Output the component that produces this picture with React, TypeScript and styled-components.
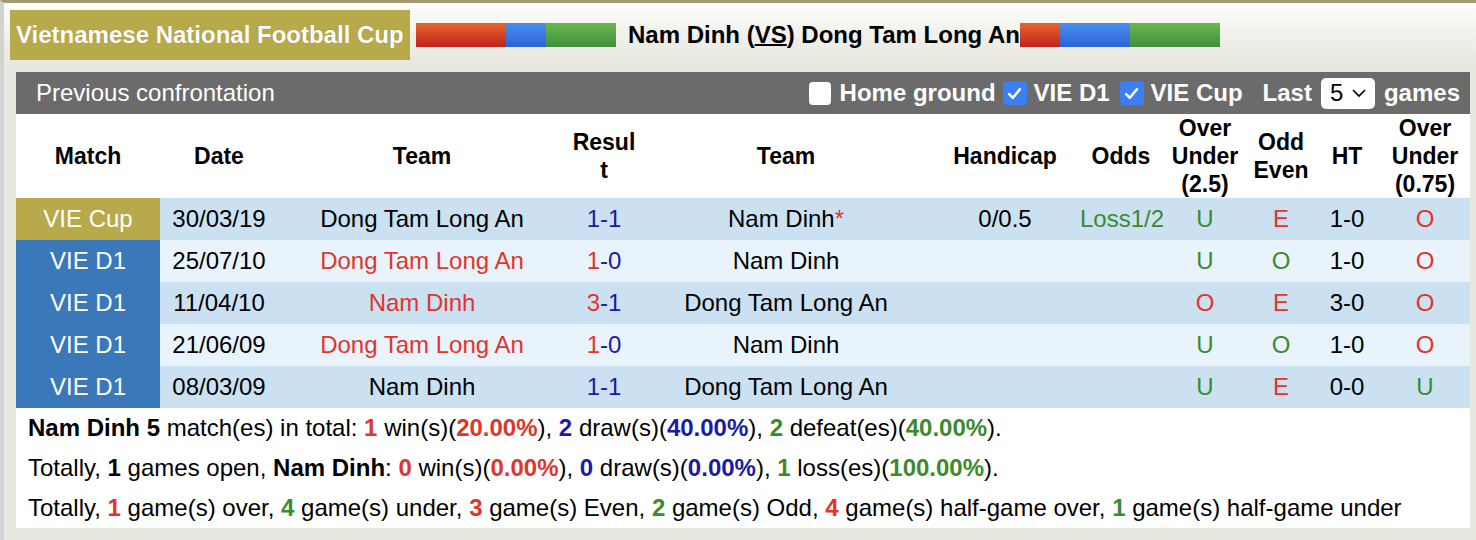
import React, {FC} from 'react';
import styled, {createGlobalStyle} from 'styled-components';

const GlobalStyle = createGlobalStyle`
  html, body {
    margin: 0;
    padding: 0;
    background: #e8e8e0;
    font-family: "Liberation Sans", Arial, sans-serif;
  }
`;

const RED = '#e0352b';
const BLUE = '#1a1aa8';
const GREEN = '#3b8a2c';

type Tone = 'red' | 'blue' | 'green' | 'black';
const toneColor = (t?: Tone) => t === 'red' ? RED : t === 'blue' ? BLUE : t === 'green' ? GREEN : '#000';

interface Row {
    league: 'VIE Cup' | 'VIE D1';
    date: string;
    home: string;
    homeTone: Tone;
    score: [string, string];
    scoreTone: [Tone, Tone];
    away: string;
    star?: boolean;
    handicap: string;
    odds: string;
    ou: ['U' | 'O', Tone];
    oe: ['O' | 'E', Tone];
    ht: string;
    ou2: ['U' | 'O', Tone];
}

const rows: Row[] = [
    {league: 'VIE Cup', date: '30/03/19', home: 'Dong Tam Long An', homeTone: 'black', score: ['1', '-1'], scoreTone: ['blue', 'blue'], away: 'Nam Dinh', star: true, handicap: '0/0.5', odds: 'Loss1/2', ou: ['U', 'green'], oe: ['E', 'red'], ht: '1-0', ou2: ['O', 'red']},
    {league: 'VIE D1', date: '25/07/10', home: 'Dong Tam Long An', homeTone: 'red', score: ['1', '-0'], scoreTone: ['red', 'blue'], away: 'Nam Dinh', handicap: '', odds: '', ou: ['U', 'green'], oe: ['O', 'green'], ht: '1-0', ou2: ['O', 'red']},
    {league: 'VIE D1', date: '11/04/10', home: 'Nam Dinh', homeTone: 'red', score: ['3', '-1'], scoreTone: ['red', 'blue'], away: 'Dong Tam Long An', handicap: '', odds: '', ou: ['O', 'red'], oe: ['E', 'red'], ht: '3-0', ou2: ['O', 'red']},
    {league: 'VIE D1', date: '21/06/09', home: 'Dong Tam Long An', homeTone: 'red', score: ['1', '-0'], scoreTone: ['red', 'blue'], away: 'Nam Dinh', handicap: '', odds: '', ou: ['U', 'green'], oe: ['O', 'green'], ht: '1-0', ou2: ['O', 'red']},
    {league: 'VIE D1', date: '08/03/09', home: 'Nam Dinh', homeTone: 'black', score: ['1', '-1'], scoreTone: ['blue', 'blue'], away: 'Dong Tam Long An', handicap: '', odds: '', ou: ['U', 'green'], oe: ['E', 'red'], ht: '0-0', ou2: ['U', 'green']},
];

const colWidths = [144, 118, 288, 76, 288, 150, 82, 86, 66, 66, 90];

const Page = styled.div`
  border-top: 3px solid #a39b6d;
  border-left: 4px solid #d2d2d0;
  min-height: 537px;
`;

const TopBar = styled.div`
  display: flex;
  align-items: center;
  height: 57px;
  padding: 7px 0 0 6px;
  box-sizing: border-box;
  background: linear-gradient(#fdfdfb, #e8e8e0);
`;

const Title = styled.div`
  width: 400px;
  height: 50px;
  background: #b8aa4a;
  color: #fff;
  font-size: 24px;
  font-weight: bold;
  line-height: 50px;
  padding-left: 6px;
  box-sizing: border-box;
  text-shadow: 0 0 1px rgba(0, 0, 0, .25);
  white-space: nowrap;
`;

const ColorBar = styled.div`
  display: flex;
  height: 24px;
  flex: none;
`;

const Seg = styled.span<{ $w: number; $c: 'red' | 'blue' | 'green' }>`
  width: ${p => p.$w}px;
  background: ${p => p.$c === 'red'
    ? 'linear-gradient(#e8652c, #c0241c)'
    : p.$c === 'blue'
      ? 'linear-gradient(#4a8ff0, #2c62d4)'
      : 'linear-gradient(#6cb84c, #3f9040)'};
`;

const Versus = styled.div`
  margin-left: 12px;
  font-size: 24px;
  font-weight: bold;
  color: #000;
  white-space: nowrap;

  u {
    text-decoration-thickness: 2px;
  }
`;

const Panel = styled.div`
  margin: 12px 6px 0 12px;
`;

const PanelHead = styled.div`
  display: flex;
  align-items: center;
  height: 42px;
  background: #6b6b6b;
  padding: 0 10px 0 20px;
  color: #fff;
`;

const HeadTitle = styled.div`
  font-size: 24px;
  flex: 1;
`;

const Controls = styled.div`
  display: flex;
  align-items: center;
  font-size: 24px;
  font-weight: bold;
`;

const Box = styled.span<{ $on?: boolean; $gap: number }>`
  display: inline-flex;
  align-items: center;
  justify-content: center;
  width: ${p => p.$on ? 24 : 22}px;
  height: ${p => p.$on ? 24 : 23}px;
  border-radius: 4px;
  background: ${p => p.$on ? '#3a7ff4' : '#fff'};
  margin-right: ${p => p.$gap}px;
`;

const Label = styled.span<{ $gap: number }>`
  margin-right: ${p => p.$gap}px;
`;

const Select = styled.span`
  display: inline-flex;
  align-items: center;
  gap: 8px;
  height: 31px;
  width: 54px;
  box-sizing: border-box;
  padding-left: 9px;
  background: #fff;
  border-radius: 5px;
  color: #000;
  font-weight: normal;
  margin-right: 9px;
`;

const Check: FC<{ on?: boolean; gap: number }> = ({on, gap}) => (
    <Box $on={on} $gap={gap}>
        {on && (
            <svg width="15" height="15" viewBox="0 0 14 14">
                <path d="M2 7.5 L5.5 11 L12 3" fill="none" stroke="#fff" strokeWidth="2.4" strokeLinecap="round" strokeLinejoin="round"/>
            </svg>
        )}
    </Box>
);

const Table = styled.table`
  width: 1454px;
  table-layout: fixed;
  border-collapse: collapse;
`;

const Th = styled.th<{ $breakAll?: boolean }>`
  height: 84px;
  background: #fff;
  font-size: 23px;
  line-height: 28px;
  font-weight: bold;
  padding: 0 4px;
  text-align: center;
  vertical-align: middle;
  word-break: ${p => p.$breakAll ? 'break-all' : 'normal'};
`;

const Tr = styled.tr<{ $alt: boolean }>`
  height: 42px;
  background: ${p => p.$alt ? '#e8f3fb' : '#cbe1f2'};
`;

const Td = styled.td<{ $tone?: Tone }>`
  padding: 0;
  text-align: center;
  font-size: 24px;
  color: ${p => toneColor(p.$tone)};
  white-space: nowrap;
`;

const League = styled(Td)<{ $cup: boolean }>`
  background: ${p => p.$cup ? '#b8aa4a' : '#3a78b9'};
  color: #fff;
`;

const Tone = styled.span<{ $tone: Tone }>`
  color: ${p => toneColor(p.$tone)};
`;

const Star = styled.span`
  color: ${RED};
`;

const Summary = styled.div`
  background: #fff;
  padding: 0 12px;
  font-size: 24px;
  line-height: 40px;
  color: #000;
  white-space: nowrap;
`;

const Num = styled.b<{ $tone?: Tone }>`
  color: ${p => toneColor(p.$tone)};
`;

const headers = ['Match', 'Date', 'Team', 'Result', 'Team', 'Handicap', 'Odds', 'Over Under (2.5)', 'Odd Even', 'HT', 'Over Under (0.75)'];

export default function App() {
    return (
        <Page>
            <GlobalStyle/>
            <TopBar>
                <Title>Vietnamese National Football Cup</Title>
                <ColorBar style={{marginLeft: 6}}>
                    <Seg $w={90} $c="red"/>
                    <Seg $w={40} $c="blue"/>
                    <Seg $w={70} $c="green"/>
                </ColorBar>
                <Versus>Nam Dinh (<u>VS</u>) Dong Tam Long An</Versus>
                <ColorBar>
                    <Seg $w={40} $c="red"/>
                    <Seg $w={70} $c="blue"/>
                    <Seg $w={90} $c="green"/>
                </ColorBar>
            </TopBar>
            <Panel>
                <PanelHead>
                    <HeadTitle>Previous confrontation</HeadTitle>
                    <Controls>
                        <Check gap={9}/>
                        <Label $gap={7}>Home ground</Label>
                        <Check on gap={7}/>
                        <Label $gap={10}>VIE D1</Label>
                        <Check on gap={7}/>
                        <Label $gap={20}>VIE Cup</Label>
                        <Label $gap={9}>Last</Label>
                        <Select>
                            5
                            <svg width="16" height="10" viewBox="0 0 16 10">
                                <path d="M2 2 L8 8 L14 2" fill="none" stroke="#000" strokeWidth="1.6"/>
                            </svg>
                        </Select>
                        <Label $gap={0}>games</Label>
                    </Controls>
                </PanelHead>
                <Table>
                    <colgroup>
                        {colWidths.map((w, i) => <col key={i} style={{width: w}}/>)}
                    </colgroup>
                    <thead>
                    <tr>
                        {headers.map((h, i) => <Th key={i} $breakAll={h === 'Result'}>{h}</Th>)}
                    </tr>
                    </thead>
                    <tbody>
                    {rows.map((r, i) => (
                        <Tr key={i} $alt={i % 2 === 1}>
                            <League $cup={r.league === 'VIE Cup'}>{r.league}</League>
                            <Td>{r.date}</Td>
                            <Td $tone={r.homeTone}>{r.home}</Td>
                            <Td>
                                <Tone $tone={r.scoreTone[0]}>{r.score[0]}</Tone>
                                <Tone $tone={r.scoreTone[1]}>{r.score[1]}</Tone>
                            </Td>
                            <Td>{r.away}{r.star && <Star>*</Star>}</Td>
                            <Td>{r.handicap}</Td>
                            <Td $tone="green">{r.odds}</Td>
                            <Td $tone={r.ou[1]}>{r.ou[0]}</Td>
                            <Td $tone={r.oe[1]}>{r.oe[0]}</Td>
                            <Td>{r.ht}</Td>
                            <Td $tone={r.ou2[1]}>{r.ou2[0]}</Td>
                        </Tr>
                    ))}
                    </tbody>
                </Table>
                <Summary>
                    <div>
                        <b>Nam Dinh 5</b> match(es) in total: <Num $tone="red">1</Num> win(s)(<Num $tone="red">20.00%</Num>), <Num $tone="blue">2</Num> draw(s)(<Num $tone="blue">40.00%</Num>), <Num $tone="green">2</Num> defeat(es)(<Num $tone="green">40.00%</Num>).
                    </div>
                    <div>
                        Totally, <b>1</b> games open, <b>Nam Dinh</b>: <Num $tone="red">0</Num> win(s)(<Num $tone="red">0.00%</Num>), <Num $tone="blue">0</Num> draw(s)(<Num $tone="blue">0.00%</Num>), <Num $tone="green">1</Num> loss(es)(<Num $tone="green">100.00%</Num>).
                    </div>
                    <div>
                        Totally, <Num $tone="red">1</Num> game(s) over, <Num $tone="green">4</Num> game(s) under, <Num $tone="red">3</Num> game(s) Even, <Num $tone="green">2</Num> game(s) Odd, <Num $tone="red">4</Num> game(s) half-game over, <Num $tone="green">1</Num> game(s) half-game under
                    </div>
                </Summary>
            </Panel>
        </Page>
    );
}
